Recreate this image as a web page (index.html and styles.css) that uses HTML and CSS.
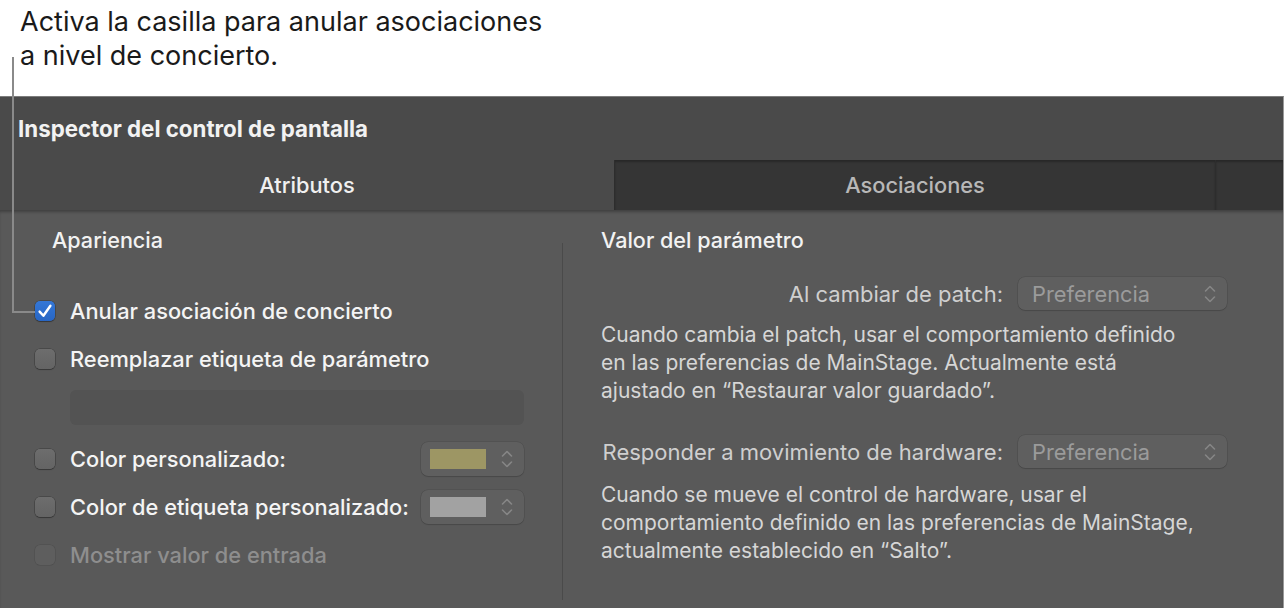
FILE: index.html
```html
<!DOCTYPE html>
<html lang="es">
<head>
<meta charset="utf-8">
<title>Inspector del control de pantalla</title>
<link rel="stylesheet" href="styles.css">
</head>
<body>
<div class="page">
  <div class="callout">Activa la casilla para anular asociaciones<br>a nivel de concierto.</div>
  <div class="leader"></div>
  <div class="panel">
    <div class="header">Inspector del control de pantalla</div>
    <div class="tabs">
      <div class="tab active">Atributos</div>
      <div class="tab">Asociaciones</div>
      <div class="tab"></div>
    </div>
    <div class="content">
      <div class="col-left">
        <div class="heading">Apariencia</div>
        <div class="row">
          <span class="check checked"><svg viewBox="0 0 20 20" width="20" height="20"><path d="M4.6 10.6 L8.4 14.8 L15.4 4.8" fill="none" stroke="#fff" stroke-width="2.4" stroke-linecap="round" stroke-linejoin="round"/></svg></span>
          <span class="label">Anular asociación de concierto</span>
        </div>
        <div class="row">
          <span class="check"></span>
          <span class="label">Reemplazar etiqueta de parámetro</span>
        </div>
        <div class="field"></div>
        <div class="row row-color">
          <span class="check"></span>
          <span class="label">Color personalizado:</span>
          <span class="well"><span class="swatch swatch-olive"></span><svg class="chev" viewBox="0 0 12 22" width="12" height="22"><path d="M1.5 8 L6 3.5 L10.5 8 M1.5 14 L6 18.5 L10.5 14" fill="none" stroke="#868686" stroke-width="1.6" stroke-linecap="round" stroke-linejoin="round"/></svg></span>
        </div>
        <div class="row row-color">
          <span class="check"></span>
          <span class="label">Color de etiqueta personalizado:</span>
          <span class="well"><span class="swatch swatch-gray"></span><svg class="chev" viewBox="0 0 12 22" width="12" height="22"><path d="M1.5 8 L6 3.5 L10.5 8 M1.5 14 L6 18.5 L10.5 14" fill="none" stroke="#868686" stroke-width="1.6" stroke-linecap="round" stroke-linejoin="round"/></svg></span>
        </div>
        <div class="row disabled">
          <span class="check"></span>
          <span class="label">Mostrar valor de entrada</span>
        </div>
      </div>
      <div class="divider"></div>
      <div class="col-right">
        <div class="heading">Valor del parámetro</div>
        <div class="formrow first">
          <span class="flabel">Al cambiar de patch:</span>
          <span class="popup"><span>Preferencia</span><svg class="chev" viewBox="0 0 12 22" width="12" height="22"><path d="M1.5 8 L6 3.5 L10.5 8 M1.5 14 L6 18.5 L10.5 14" fill="none" stroke="#868686" stroke-width="1.6" stroke-linecap="round" stroke-linejoin="round"/></svg></span>
        </div>
        <p class="desc">Cuando cambia el patch, usar el comportamiento definido<br>en las preferencias de MainStage. Actualmente está<br>ajustado en “Restaurar valor guardado”.</p>
        <div class="formrow second">
          <span class="flabel">Responder a movimiento de hardware:</span>
          <span class="popup"><span>Preferencia</span><svg class="chev" viewBox="0 0 12 22" width="12" height="22"><path d="M1.5 8 L6 3.5 L10.5 8 M1.5 14 L6 18.5 L10.5 14" fill="none" stroke="#868686" stroke-width="1.6" stroke-linecap="round" stroke-linejoin="round"/></svg></span>
        </div>
        <p class="desc desc2">Cuando se mueve el control de hardware, usar el<br>comportamiento definido en las preferencias de MainStage,<br>actualmente establecido en “Salto”.</p>
      </div>
    </div>
  </div>
</div>
</body>
</html>
```

FILE: styles.css
```css
* { box-sizing: border-box; }
html, body { margin: 0; padding: 0; background: #ffffff; }
body { font-family: Inter, Roboto, "Liberation Sans", sans-serif; width: 1285px; height: 609px; overflow: hidden; }
.page { position: relative; width: 1285px; height: 609px; }

.callout {
  height: 96px;
  padding: 5px 0 0 20px;
  font-size: 27px;
  line-height: 34px;
  color: #1a1a1a;
}

.leader {
  position: absolute;
  left: 12px;
  top: 57px;
  width: 23px;
  height: 256px;
  border-left: 2px solid #8a8a8a;
  border-bottom: 2px solid #8a8a8a;
  z-index: 5;
}

.panel {
  width: 1284px;
  height: 512px;
  background: #4a4a4a;
  border-top: 1px solid #7c7c7c;
  border-right: 1px solid #9a9a9a;
  display: flex;
  flex-direction: column;
}

.header {
  height: 63px;
  padding-left: 18px;
  display: flex;
  align-items: center;
  font-size: 22.3px;
  font-weight: 700;
  color: #f2f2f2;
}

.tabs {
  height: 50px;
  display: grid;
  grid-template-columns: 614px 601px 1fr;
}
.tab {
  display: flex;
  align-items: center;
  justify-content: center;
  font-size: 21.8px;
  font-weight: 500;
  color: #b8b8b8;
  background: #353535;
  border-left: 1px solid #2d2d2d;
  box-shadow: inset 0 2px 2px rgba(0,0,0,0.25);
}
.tab.active {
  background: #4a4a4a;
  color: #f0f0f0;
  border-left: none;
  box-shadow: none;
}

.content {
  flex: 1;
  background: #595959;
  display: grid;
  grid-template-columns: 562px 1px 1fr;
  box-shadow: inset 0 3px 3px -1px rgba(0,0,0,0.28);
}

.heading {
  font-size: 21.6px;
  font-weight: 500;
  line-height: 24px;
  color: #f2f2f2;
  margin-top: 18px;
}

.col-left { padding-left: 35px; }
.col-left .heading { padding-left: 17px; margin-bottom: 35px; }

.row {
  height: 48px;
  display: flex;
  align-items: center;
  gap: 15px;
  font-size: 21.8px;
  font-weight: 500;
  color: #f4f4f4;
}
.row-color { padding-right: 38px; gap: 0; }
.row-color .check { margin-right: 15px; }
.row-color .well { margin-left: auto; }

.check {
  width: 20px;
  height: 20px;
  flex: none;
  border-radius: 5px;
  background: linear-gradient(#6d6d6d, #646464);
  box-shadow: 0 0 0 0.5px rgba(0,0,0,0.35), 0 1px 1px rgba(0,0,0,0.25);
  display: flex;
}
.check.checked {
  background: linear-gradient(#3477d6, #2866c4);
}
.disabled { color: #8e8e8e; }
.disabled .check { background: #5e5e5e; box-shadow: 0 0 0 0.5px rgba(0,0,0,0.15); }

.field {
  margin: 7px 38px 10px 35px;
  height: 35px;
  border-radius: 6px;
  background: #535353;
}

.well {
  width: 103px;
  height: 34px;
  border-radius: 7px;
  background: #5f5f5f;
  box-shadow: 0 0 0 0.5px rgba(0,0,0,0.15), 0 1px 1px rgba(0,0,0,0.12);
  display: flex;
  align-items: center;
  padding-left: 9px;
}
.swatch { width: 56px; height: 20px; }
.swatch-olive { background: #9d9664; }
.swatch-gray { background: #a2a2a2; }
.well .chev { margin-left: 15px; }

.divider {
  background: #4a4a4a;
  margin-top: 33px;
  margin-bottom: 8px;
}

.col-right { padding-left: 38px; }
.formrow {
  width: 626px;
  height: 33px;
  display: flex;
  justify-content: flex-end;
  align-items: center;
  gap: 15px;
  font-size: 22px;
  color: #cfcfcf;
}
.formrow.first { margin-top: 25px; }
.formrow.second { margin-top: 30px; }
.popup {
  width: 209px;
  height: 33px;
  border-radius: 7px;
  background: #5f5f5f;
  box-shadow: 0 0 0 0.5px rgba(0,0,0,0.15), 0 1px 1px rgba(0,0,0,0.12);
  display: flex;
  align-items: center;
  justify-content: space-between;
  padding: 0 11px 0 14px;
  font-size: 21.8px;
  color: #9b9b9b;
}

.desc {
  margin: 11px 0 0 0;
  font-size: 21px;
  line-height: 28px;
  color: #d6d6d6;
}
.desc2 { margin-top: 13px; }
```
